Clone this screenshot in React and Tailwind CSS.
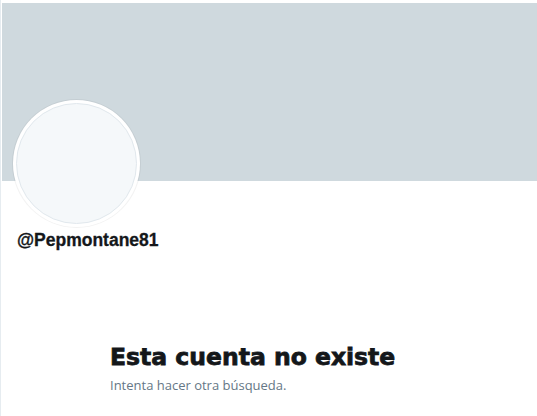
import React from "react";

const ProfileNotFound = () => {
  return (
    <div className="min-h-screen bg-white border-l border-[#e6ecf0] pt-[3px] pl-[1px] font-['Liberation_Sans',sans-serif]">
      <div className="h-[178px] bg-[#cfd9de]" />

      <div className="ml-[11px] -mt-[81px] w-[127px] h-[127px] rounded-full bg-white p-[3px] shadow-[0_0_0_1px_rgba(0,0,0,0.05)]">
        <div className="w-full h-full rounded-full bg-[#f5f8fa] border border-[#e1e8ed]" />
      </div>

      <div className="ml-[15px] mt-[3px] text-[17.5px] leading-5 font-bold text-[#14171a] [-webkit-text-stroke:0.3px_#14171a]">
        @Pepmontane81
      </div>

      <div className="ml-[108px] mt-[93px]">
        <h2 className="font-['DejaVu_Sans',sans-serif] font-bold text-[23.5px] leading-7 text-[#14171a] [-webkit-text-stroke:0.8px_#14171a]">
          Esta cuenta no existe
        </h2>
        <p className="mt-[6px] text-[13px] leading-4 text-[#657786] font-['Open_Sans',sans-serif]">
          Intenta hacer otra búsqueda.
        </p>
      </div>
    </div>
  );
};

export default function App() {
  return <ProfileNotFound />;
}
